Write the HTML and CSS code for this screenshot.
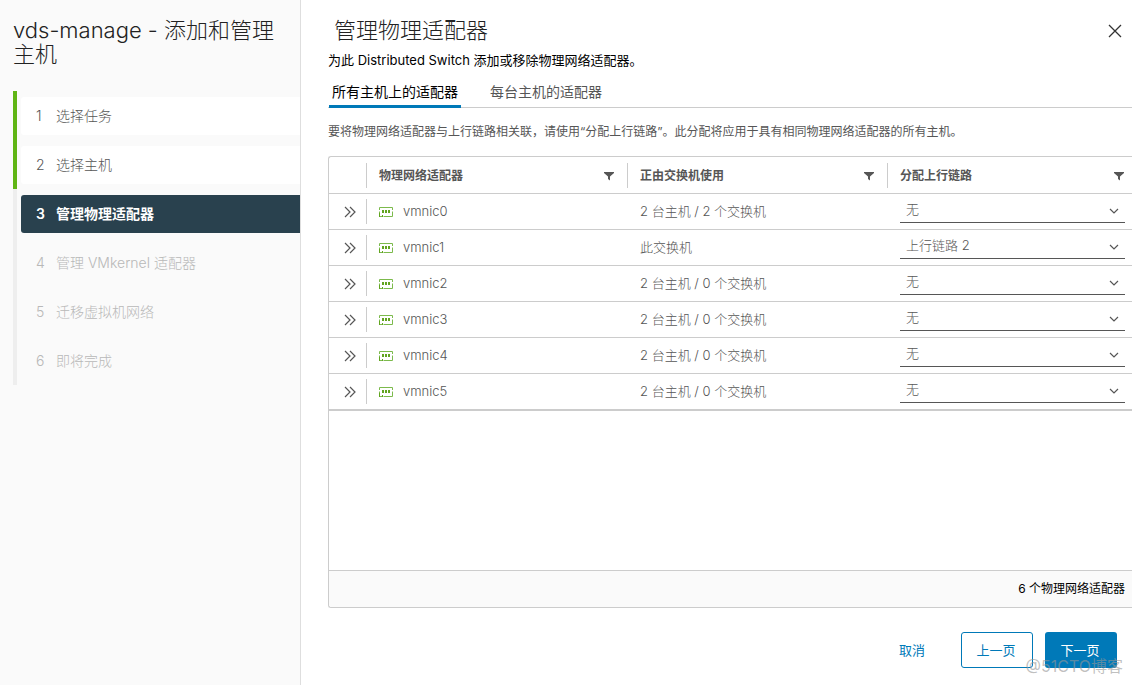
FILE: index.html
```html
<!DOCTYPE html>
<html lang="zh-CN">
<head>
<meta charset="utf-8">
<title>vds-manage - 添加和管理主机</title>
<link rel="stylesheet" href="styles.css">
</head>
<body>
<svg class="sprite" aria-hidden="true">
  <symbol id="filter" viewBox="0 0 10 10"><path d="M0 1h10v1L6 5.500V9.500L4 8V5.500L0 2z" fill="#565656"/></symbol>
  <symbol id="expand" viewBox="0 0 12 12"><path d="M1 1l5 5-5 5M6 1l5 5-5 5" fill="none" stroke="#565656" stroke-width="1.200"/></symbol>
  <symbol id="nic" viewBox="0 0 14 10"><path d="M.5 3V.5H13.500V3M.5 4.500V9.500H3M4.500 9.500H13.500V4.500" fill="none" stroke="#7cba4c"/><path d="M3 3h2v3H3zM6 3h2v3H6zM9 3h2v3H9zM3 8h1v2H3zM0 6h1v4H0z" fill="#62a420"/></symbol>
  <symbol id="chevron" viewBox="0 0 10 6"><path d="M1 1l4 4 4-4" fill="none" stroke="#565656" stroke-width="1.200"/></symbol>
</svg>
<div class="wizard">
  <aside class="side">
    <h1 class="side-title">vds-manage - 添加和管理主机</h1>
    <ol class="steps">
      <li class="step done"><button class="step-btn"><span class="num">1</span>选择任务</button></li>
      <li class="step done"><button class="step-btn"><span class="num">2</span>选择主机</button></li>
      <li class="step current"><button class="step-btn" aria-current="step"><span class="num">3</span>管理物理适配器</button></li>
      <li class="step"><button class="step-btn" disabled><span class="num">4</span>管理 VMkernel 适配器</button></li>
      <li class="step"><button class="step-btn" disabled><span class="num">5</span>迁移虚拟机网络</button></li>
      <li class="step"><button class="step-btn" disabled><span class="num">6</span>即将完成</button></li>
    </ol>
  </aside>
  <main class="main">
    <header class="head">
      <h2 class="title">管理物理适配器</h2>
      <button class="close" aria-label="关闭"><svg width="14" height="14" viewBox="0 0 14 14"><path d="M1 1l12 12M13 1L1 13" stroke="#333" stroke-width="1.300"/></svg></button>
    </header>
    <p class="subtitle">为此 Distributed Switch 添加或移除物理网络适配器。</p>
    <div class="tabs" role="tablist">
      <button class="tab active" role="tab" aria-selected="true">所有主机上的适配器</button>
      <button class="tab" role="tab" aria-selected="false">每台主机的适配器</button>
    </div>
    <p class="hint">要将物理网络适配器与上行链路相关联，请使用“分配上行链路”。此分配将应用于具有相同物理网络适配器的所有主机。</p>
    <section class="grid">
      <table class="table">
        <colgroup><col class="c-expand"><col class="c-name"><col class="c-used"><col></colgroup>
        <thead>
          <tr>
            <th></th>
            <th><div class="cell sep">物理网络适配器<button class="filter" aria-label="筛选"><svg width="10" height="10"><use href="#filter"/></svg></button></div></th>
            <th><div class="cell sep">正由交换机使用<button class="filter" aria-label="筛选"><svg width="10" height="10"><use href="#filter"/></svg></button></div></th>
            <th><div class="cell sep last">分配上行链路<button class="filter" aria-label="筛选"><svg width="10" height="10"><use href="#filter"/></svg></button></div></th>
          </tr>
        </thead>
        <tbody>
          <tr>
            <td><button class="expand" aria-label="展开"><svg width="12" height="12"><use href="#expand"/></svg></button></td>
            <td><div class="cell sep name"><svg width="14" height="10"><use href="#nic"/></svg>vmnic0</div></td>
            <td><div class="cell">2 台主机 / 2 个交换机</div></td>
            <td><div class="pick"><select class="select" aria-label="vmnic0 上行链路"><option>无</option></select><svg class="caret" width="10" height="6"><use href="#chevron"/></svg></div></td>
          </tr>
          <tr>
            <td><button class="expand" aria-label="展开"><svg width="12" height="12"><use href="#expand"/></svg></button></td>
            <td><div class="cell sep name"><svg width="14" height="10"><use href="#nic"/></svg>vmnic1</div></td>
            <td><div class="cell">此交换机</div></td>
            <td><div class="pick"><select class="select" aria-label="vmnic1 上行链路"><option>上行链路 2</option></select><svg class="caret" width="10" height="6"><use href="#chevron"/></svg></div></td>
          </tr>
          <tr>
            <td><button class="expand" aria-label="展开"><svg width="12" height="12"><use href="#expand"/></svg></button></td>
            <td><div class="cell sep name"><svg width="14" height="10"><use href="#nic"/></svg>vmnic2</div></td>
            <td><div class="cell">2 台主机 / 0 个交换机</div></td>
            <td><div class="pick"><select class="select" aria-label="vmnic2 上行链路"><option>无</option></select><svg class="caret" width="10" height="6"><use href="#chevron"/></svg></div></td>
          </tr>
          <tr>
            <td><button class="expand" aria-label="展开"><svg width="12" height="12"><use href="#expand"/></svg></button></td>
            <td><div class="cell sep name"><svg width="14" height="10"><use href="#nic"/></svg>vmnic3</div></td>
            <td><div class="cell">2 台主机 / 0 个交换机</div></td>
            <td><div class="pick"><select class="select" aria-label="vmnic3 上行链路"><option>无</option></select><svg class="caret" width="10" height="6"><use href="#chevron"/></svg></div></td>
          </tr>
          <tr>
            <td><button class="expand" aria-label="展开"><svg width="12" height="12"><use href="#expand"/></svg></button></td>
            <td><div class="cell sep name"><svg width="14" height="10"><use href="#nic"/></svg>vmnic4</div></td>
            <td><div class="cell">2 台主机 / 0 个交换机</div></td>
            <td><div class="pick"><select class="select" aria-label="vmnic4 上行链路"><option>无</option></select><svg class="caret" width="10" height="6"><use href="#chevron"/></svg></div></td>
          </tr>
          <tr>
            <td><button class="expand" aria-label="展开"><svg width="12" height="12"><use href="#expand"/></svg></button></td>
            <td><div class="cell sep name"><svg width="14" height="10"><use href="#nic"/></svg>vmnic5</div></td>
            <td><div class="cell">2 台主机 / 0 个交换机</div></td>
            <td><div class="pick"><select class="select" aria-label="vmnic5 上行链路"><option>无</option></select><svg class="caret" width="10" height="6"><use href="#chevron"/></svg></div></td>
          </tr>
        </tbody>
      </table>
      <footer class="grid-foot">6 个物理网络适配器</footer>
    </section>
    <div class="actions">
      <button class="btn link">取消</button>
      <button class="btn outline">上一页</button>
      <button class="btn primary">下一页</button>
    </div>
  </main>
  <span class="watermark">@51CTO博客</span>
</div>
</body>
</html>
```

FILE: styles.css
```css
* { box-sizing: border-box; }

body {
  margin: 0;
  font-family: Inter, "Noto Sans CJK SC", sans-serif;
  font-size: 13px;
  color: #565656;
  background: #fff;
}

button, select {
  font: inherit;
  color: inherit;
  background: none;
  border: 0;
  border-radius: 0;
  padding: 0;
  margin: 0;
}

svg { display: block; flex: none; }
.sprite { position: absolute; width: 0; height: 0; }

.wizard {
  position: relative;
  display: flex;
  min-height: 100vh;
  overflow: hidden;
}

.side {
  flex: none;
  width: 301px;
  padding: 18px 0 0 13px;
  background: #fafafa;
  border-right: 1px solid #dedede;
}

.side-title, .title {
  margin: 0;
  font-size: 22px;
  font-weight: 300;
  line-height: 24px;
  color: #222;
}

.side-title { padding-right: 16px; }
.title { padding-bottom: 2px; }

.steps { list-style: none; margin: 25px 0 0; padding: 0; }

.step {
  height: 49px;
  padding: 6px 0 5px 4px;
  border-left: 4px solid #eee;
}

.step.done { border-left-color: #60b515; }

.step-btn {
  display: flex;
  align-items: center;
  width: 100%;
  height: 38px;
  padding: 0 0 2px 15px;
  border-radius: 3px 0 0 3px;
  font-size: 14px;
  font-weight: 300;
  text-align: left;
}

.num { width: 20px; }
.done .step-btn { background: #fff; }
.current .step-btn { background: #29414e; color: #fff; font-weight: 600; }
.step-btn:disabled { color: #b8b8b8; }

.main {
  flex: 1;
  min-width: 0;
  display: flex;
  flex-direction: column;
  padding: 18px 0 17px 27px;
}

.head {
  display: flex;
  justify-content: space-between;
  align-items: center;
  height: 26px;
  padding: 0 10px 0 6px;
}

.subtitle { margin: 4px 0; line-height: 24px; color: #000; }

.tabs {
  display: flex;
  gap: 25px;
  height: 32px;
  border-bottom: 1px solid #ccc;
}

.tab {
  height: 32px;
  margin-left: 1px;
  padding: 0 3px;
  border-bottom: 3px solid transparent;
  font-size: 14px;
}

.tab.active { color: #000; border-bottom-color: #0079b8; }

.hint { margin: 14px 0; font-size: 12px; line-height: 20px; }

.grid {
  flex: 1;
  display: flex;
  flex-direction: column;
  border: 1px solid #ccc;
  border-right: 0;
  border-radius: 3px 0 0 3px;
}

.table { width: 100%; table-layout: fixed; border-collapse: separate; border-spacing: 0; }
.c-expand { width: 37px; }
.c-name { width: 261px; }
.c-used { width: 260px; }

th, td { height: 36px; padding: 0; border-bottom: 1px solid #ccc; }
th { height: 37px; font-size: 12px; font-weight: 600; text-align: left; }
tbody tr:last-child td { height: 37px; border-bottom-width: 2px; }

.cell {
  display: flex;
  align-items: center;
  height: 25px;
  padding: 0 0 2px 12px;
  border-left: 1px solid transparent;
  font-weight: 300;
}

th .cell { justify-content: space-between; padding-right: 13px; font-weight: 600; }
th .last { padding-right: 8px; }
.sep { border-left-color: #ccc; }
.name { gap: 10px; }
.name svg { margin-top: 2px; }
.filter { padding-top: 4px; }
.expand { display: block; margin: 0 auto; padding-left: 4px; }

.pick { position: relative; margin: 0 7px 2px 13px; }

.select {
  appearance: none;
  display: block;
  width: 100%;
  height: 24px;
  padding: 0 24px 2px 6px;
  border-bottom: 1px solid #565656;
  font-weight: 300;
}

.caret { position: absolute; right: 6px; top: 9px; pointer-events: none; }

.grid-foot {
  margin-top: auto;
  padding: 0 7px;
  border-top: 1px solid #ccc;
  border-radius: 0 0 0 3px;
  background: #fafafa;
  font-size: 12px;
  line-height: 36px;
  text-align: right;
  color: #000;
}

.actions { display: flex; justify-content: flex-end; gap: 12px; padding: 24px 15px 0 0; }

.btn {
  min-width: 72px;
  height: 36px;
  padding: 0 2px 2px 0;
  border: 1px solid transparent;
  border-radius: 3px;
  color: #0079b8;
}

.outline { border-color: #0079b8; }
.primary { background: #0079b8; color: #fff; }

.watermark {
  position: absolute;
  right: 9px;
  bottom: 7px;
  font-size: 16px;
  line-height: 24px;
  color: rgba(150, 150, 150, 0.6);
  pointer-events: none;
}
```
